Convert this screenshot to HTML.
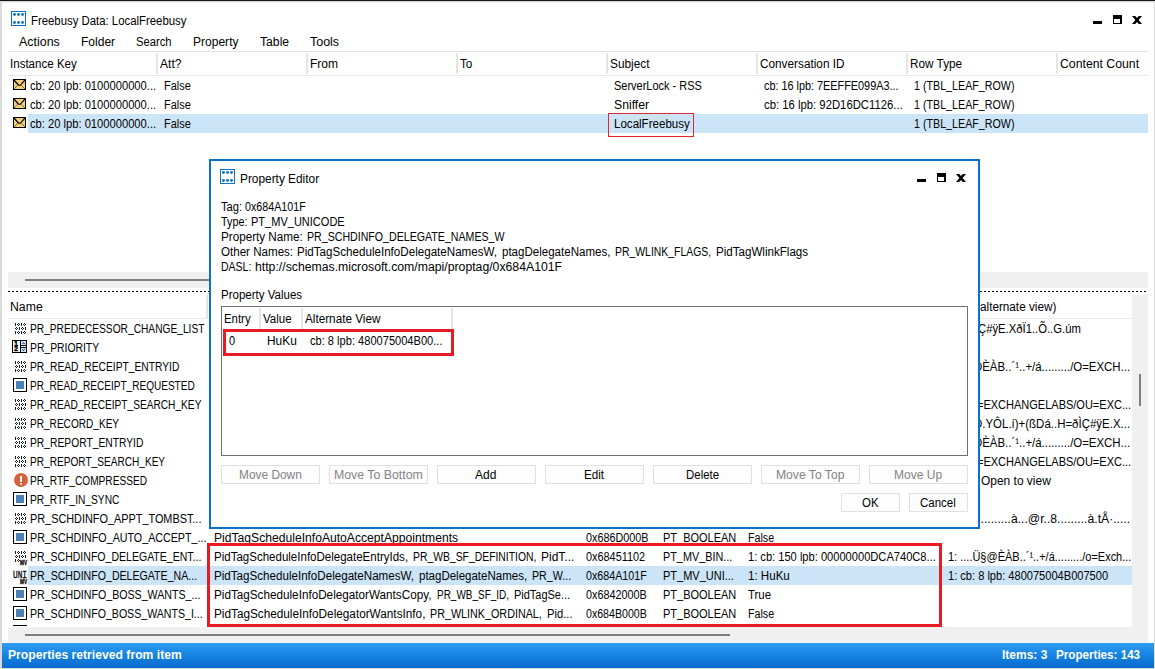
<!DOCTYPE html>
<html><head><meta charset="utf-8"><title>Freebusy Data: LocalFreebusy</title>
<style>
html,body{margin:0;padding:0;}
body{width:1155px;height:669px;position:relative;overflow:hidden;background:#fff;
 font-family:"Liberation Sans",sans-serif;font-size:12px;color:#000;}
.r{position:absolute;box-sizing:border-box;}
.t{position:absolute;white-space:nowrap;line-height:16px;font-size:12px;display:inline-block;transform-origin:0 0;}
.t i{font-style:normal;position:relative;top:-1px;}
.b{font-weight:bold;}
.g{color:#838383;}
svg{position:absolute;overflow:visible;}
.btn{position:absolute;box-sizing:border-box;border:1px solid #e1e1e1;background:#fdfdfd;}
</style></head><body>

<div class="r" style="left:0px;top:0px;width:1155px;height:1px;background:#151515;"></div>
<div class="r" style="left:0px;top:1px;width:1155px;height:1px;background:#d9d9d9;"></div>
<div class="r" style="left:0px;top:2px;width:1155px;height:1px;background:#efefef;"></div>
<div class="r" style="left:0px;top:1px;width:2px;height:668px;background:#dadada;"></div>
<div class="r" style="left:1154px;top:1px;width:1px;height:668px;background:#dedede;"></div>
<svg style="left:11px;top:11px" width="15" height="15" viewBox="0 0 15 15"><rect x="0.5" y="0.5" width="14" height="14" fill="#fff" stroke="#0b73c9" stroke-width="1"/><g fill="#0b73c9"><circle cx="3.5" cy="3.5" r="1.45"/><circle cx="7.5" cy="3.5" r="1.45"/><circle cx="11.5" cy="3.5" r="1.45"/><circle cx="3.5" cy="11.5" r="1.45"/><circle cx="7.5" cy="11.5" r="1.45"/><circle cx="11.5" cy="11.5" r="1.45"/></g></svg>
<span class="t" style="left:31.1px;top:13px;transform:scaleX(0.9470);">Freebusy Data: LocalFreebusy</span>
<div class="r" style="left:1093px;top:21px;width:9px;height:3px;background:#000;"></div>
<div class="r" style="left:1113px;top:15px;width:9px;height:9px;border:1px solid #000;border-top-width:4px;border-right-width:2px;"></div>
<svg style="left:1132px;top:16px" width="10" height="8" viewBox="0 0 10 8"><path d="M0 0 H3.2 L5 1.9 L6.8 0 H10 L6.6 4 L10 8 H6.8 L5 6.1 L3.2 8 H0 L3.4 4 Z" fill="#000"/></svg>
<span class="t" style="left:18.7px;top:34px;transform:scaleX(1.0366);">Actions</span>
<span class="t" style="left:80.7px;top:34px;transform:scaleX(1.0025);">Folder</span>
<span class="t" style="left:135.7px;top:34px;transform:scaleX(0.9334);">Search</span>
<span class="t" style="left:192.7px;top:34px;transform:scaleX(1.0031);">Property</span>
<span class="t" style="left:259.7px;top:34px;transform:scaleX(1.0144);">Table</span>
<span class="t" style="left:310.4px;top:34px;transform:scaleX(1.0387);">Tools</span>
<div class="r" style="left:8px;top:51px;width:1140px;height:1px;background:#e2e2e2;"></div>
<span class="t" style="left:9.7px;top:56px;transform:scaleX(0.9629);">Instance Key</span>
<span class="t" style="left:159.7px;top:56px;transform:scaleX(1.0066);">Att?</span>
<span class="t" style="left:309.7px;top:56px;transform:scaleX(1.0036);">From</span>
<span class="t" style="left:460.4px;top:56px;transform:scaleX(0.9773);">To</span>
<span class="t" style="left:609.7px;top:56px;transform:scaleX(0.9867);">Subject</span>
<span class="t" style="left:759.7px;top:56px;transform:scaleX(0.9820);">Conversation ID</span>
<span class="t" style="left:909.7px;top:56px;transform:scaleX(0.9804);">Row Type</span>
<span class="t" style="left:1060.1px;top:56px;transform:scaleX(1.0221);">Content Count</span>
<div class="r" style="left:156px;top:53px;width:2px;height:21px;background:#e5e5e5;"></div>
<div class="r" style="left:306px;top:53px;width:2px;height:21px;background:#e5e5e5;"></div>
<div class="r" style="left:456px;top:53px;width:2px;height:21px;background:#e5e5e5;"></div>
<div class="r" style="left:606px;top:53px;width:2px;height:21px;background:#e5e5e5;"></div>
<div class="r" style="left:756px;top:53px;width:2px;height:21px;background:#e5e5e5;"></div>
<div class="r" style="left:906px;top:53px;width:2px;height:21px;background:#e5e5e5;"></div>
<div class="r" style="left:1056px;top:53px;width:2px;height:21px;background:#e5e5e5;"></div>
<div class="r" style="left:8px;top:75px;width:1140px;height:1px;background:#e8e8e8;"></div>
<div class="r" style="left:28px;top:114px;width:1120px;height:19px;background:#cce4f7;"></div>
<svg style="left:13px;top:79px" width="13" height="11" viewBox="0 0 13 11"><rect x="0.5" y="0.5" width="12" height="10" fill="#f3cd80" stroke="#000" stroke-width="1"/><path d="M1 1 L5 5.5 L5.6 6.2 H7.4 L8 5.5 L12 1" stroke="#000" stroke-width="1.15" fill="none"/><path d="M1.5 9.5 L4.5 6.5 M11.5 9.5 L8.5 6.5" stroke="#000" stroke-width="1" stroke-dasharray="1 0.5" fill="none" opacity="0.9"/></svg>
<span class="t" style="left:30.1px;top:78px;transform:scaleX(0.9309);">cb: 20 lpb: 0100000000...</span>
<span class="t" style="left:163.7px;top:78px;transform:scaleX(0.9133);">False</span>
<span class="t" style="left:613.7px;top:78px;transform:scaleX(0.9143);">ServerLock - RSS</span>
<span class="t" style="left:763.7px;top:78px;transform:scaleX(0.9041);">cb: 16 lpb: 7EEFFE099A3...</span>
<span class="t" style="left:913.7px;top:78px;transform:scaleX(0.8915);">1 (TBL<i>_</i>LEAF<i>_</i>ROW)</span>
<svg style="left:13px;top:98px" width="13" height="11" viewBox="0 0 13 11"><rect x="0.5" y="0.5" width="12" height="10" fill="#f3cd80" stroke="#000" stroke-width="1"/><path d="M1 1 L5 5.5 L5.6 6.2 H7.4 L8 5.5 L12 1" stroke="#000" stroke-width="1.15" fill="none"/><path d="M1.5 9.5 L4.5 6.5 M11.5 9.5 L8.5 6.5" stroke="#000" stroke-width="1" stroke-dasharray="1 0.5" fill="none" opacity="0.9"/></svg>
<span class="t" style="left:30.1px;top:97px;transform:scaleX(0.9309);">cb: 20 lpb: 0100000000...</span>
<span class="t" style="left:163.7px;top:97px;transform:scaleX(0.9133);">False</span>
<span class="t" style="left:613.7px;top:97px;transform:scaleX(1.0183);">Sniffer</span>
<span class="t" style="left:763.7px;top:97px;transform:scaleX(0.9428);">cb: 16 lpb: 92D16DC1126...</span>
<span class="t" style="left:913.7px;top:97px;transform:scaleX(0.8915);">1 (TBL<i>_</i>LEAF<i>_</i>ROW)</span>
<svg style="left:13px;top:117px" width="13" height="11" viewBox="0 0 13 11"><rect x="0.5" y="0.5" width="12" height="10" fill="#f3cd80" stroke="#000" stroke-width="1"/><path d="M1 1 L5 5.5 L5.6 6.2 H7.4 L8 5.5 L12 1" stroke="#000" stroke-width="1.15" fill="none"/><path d="M1.5 9.5 L4.5 6.5 M11.5 9.5 L8.5 6.5" stroke="#000" stroke-width="1" stroke-dasharray="1 0.5" fill="none" opacity="0.9"/></svg>
<span class="t" style="left:30.1px;top:116px;transform:scaleX(0.9309);">cb: 20 lpb: 0100000000...</span>
<span class="t" style="left:163.7px;top:116px;transform:scaleX(0.9133);">False</span>
<span class="t" style="left:613.7px;top:116px;transform:scaleX(0.9629);">LocalFreebusy</span>
<span class="t" style="left:913.7px;top:116px;transform:scaleX(0.8915);">1 (TBL<i>_</i>LEAF<i>_</i>ROW)</span>
<div class="r" style="left:608px;top:113px;width:86px;height:24px;border:1px solid #e4262e;"></div>
<div class="r" style="left:8px;top:272px;width:1140px;height:16px;background:#f0f0f0;"></div>
<div class="r" style="left:25px;top:279px;width:705px;height:2px;background:#7f7f7f;"></div>
<div class="r" style="left:8px;top:291px;width:1139px;height:1px;background:repeating-linear-gradient(90deg,#000 0,#000 2px,#fff 2px,#fff 4px);"></div>
<span class="t" style="left:10.1px;top:299px;transform:scaleX(1.0214);">Name</span>
<span class="t" style="left:979.9px;top:299px;transform:scaleX(0.9776);">alternate view)</span>
<div class="r" style="left:206px;top:295px;width:2px;height:23px;background:#e5e5e5;"></div>
<div class="r" style="left:8px;top:318px;width:1124px;height:1px;background:#ebebeb;"></div>
<div class="r" style="left:1132px;top:295px;width:16px;height:333px;background:#f0f0f0;"></div>
<div class="r" style="left:1139px;top:374px;width:2px;height:32px;background:#7f7f7f;"></div>
<div class="r" style="left:8px;top:627px;width:1140px;height:16px;background:#f0f0f0;"></div>
<div class="r" style="left:25px;top:634px;width:705px;height:2px;background:#7f7f7f;"></div>
<div class="r" style="left:28px;top:566px;width:1104px;height:19px;background:#cce4f7;"></div>
<svg style="left:15px;top:323px" width="11" height="11" viewBox="0 0 11 11"><g fill="#1a1a1a"><rect x="0" y="0" width="1" height="3"/><path d="M3 0 h1 v1 h1 v1 h-1 v1 h-1 v-1 h-1 v-1 h1 z M3 1 v1 h1 v-1 z" fill-rule="evenodd"/><rect x="6" y="0" width="1" height="3"/><path d="M9 0 h1 v1 h1 v1 h-1 v1 h-1 v-1 h-1 v-1 h1 z M9 1 v1 h1 v-1 z" fill-rule="evenodd"/><path d="M1 4 h1 v1 h1 v1 h-1 v1 h-1 v-1 h-1 v-1 h1 z M1 5 v1 h1 v-1 z" fill-rule="evenodd"/><rect x="4" y="4" width="1" height="3"/><path d="M7 4 h1 v1 h1 v1 h-1 v1 h-1 v-1 h-1 v-1 h1 z M7 5 v1 h1 v-1 z" fill-rule="evenodd"/><rect x="10" y="4" width="1" height="3"/><rect x="0" y="8" width="1" height="3"/><path d="M3 8 h1 v1 h1 v1 h-1 v1 h-1 v-1 h-1 v-1 h1 z M3 9 v1 h1 v-1 z" fill-rule="evenodd"/><rect x="6" y="8" width="1" height="3"/><path d="M9 8 h1 v1 h1 v1 h-1 v1 h-1 v-1 h-1 v-1 h1 z M9 9 v1 h1 v-1 z" fill-rule="evenodd"/></g></svg>
<span class="t" style="left:30.1px;top:321px;transform:scaleX(0.8489);">PR<i>_</i>PREDECESSOR<i>_</i>CHANGE<i>_</i>LIST</span>
<span class="t" style="left:978.4px;top:321px;transform:scaleX(0.9399);">Ç#ÿE.XðÏ1..Õ..G.úm</span>
<svg style="left:12px;top:340px" width="15" height="13" viewBox="0 0 15 13"><rect x="0.5" y="0.5" width="14" height="12" fill="#fff" stroke="#000" stroke-width="1"/><rect x="8" y="0" width="1" height="13" fill="#000"/><rect x="9" y="1" width="5" height="4" fill="#cfe7fb"/><rect x="9" y="8" width="5" height="4" fill="#cfe7fb"/><rect x="8" y="5" width="7" height="1" fill="#000"/><rect x="8" y="7" width="7" height="1" fill="#000"/><path d="M10.5 3.8 L11.5 2.6 L12.5 3.8 M10.5 9.4 L11.5 10.6 L12.5 9.4" stroke="#000" stroke-width="1" fill="none"/><rect x="1" y="6" width="3" height="1" fill="#fff"/></svg>
<span class="t" style="left:14.2px;top:340.6px;font:bold 6.5px 'Liberation Sans',sans-serif;line-height:6.5px;transform:scaleX(1);-webkit-text-stroke:0.5px #000;">1</span>
<span class="t" style="left:14.2px;top:346.2px;font:bold 6.5px 'Liberation Sans',sans-serif;line-height:6.5px;transform:scaleX(1);-webkit-text-stroke:0.5px #000;">2</span>
<span class="t" style="left:30.1px;top:340px;transform:scaleX(0.8634);">PR<i>_</i>PRIORITY</span>
<svg style="left:15px;top:361px" width="11" height="11" viewBox="0 0 11 11"><g fill="#1a1a1a"><rect x="0" y="0" width="1" height="3"/><path d="M3 0 h1 v1 h1 v1 h-1 v1 h-1 v-1 h-1 v-1 h1 z M3 1 v1 h1 v-1 z" fill-rule="evenodd"/><rect x="6" y="0" width="1" height="3"/><path d="M9 0 h1 v1 h1 v1 h-1 v1 h-1 v-1 h-1 v-1 h1 z M9 1 v1 h1 v-1 z" fill-rule="evenodd"/><path d="M1 4 h1 v1 h1 v1 h-1 v1 h-1 v-1 h-1 v-1 h1 z M1 5 v1 h1 v-1 z" fill-rule="evenodd"/><rect x="4" y="4" width="1" height="3"/><path d="M7 4 h1 v1 h1 v1 h-1 v1 h-1 v-1 h-1 v-1 h1 z M7 5 v1 h1 v-1 z" fill-rule="evenodd"/><rect x="10" y="4" width="1" height="3"/><rect x="0" y="8" width="1" height="3"/><path d="M3 8 h1 v1 h1 v1 h-1 v1 h-1 v-1 h-1 v-1 h1 z M3 9 v1 h1 v-1 z" fill-rule="evenodd"/><rect x="6" y="8" width="1" height="3"/><path d="M9 8 h1 v1 h1 v1 h-1 v1 h-1 v-1 h-1 v-1 h1 z M9 9 v1 h1 v-1 z" fill-rule="evenodd"/></g></svg>
<span class="t" style="left:30.1px;top:359px;transform:scaleX(0.8559);">PR<i>_</i>READ<i>_</i>RECEIPT<i>_</i>ENTRYID</span>
<span class="t" style="left:974.4px;top:359px;transform:scaleX(0.9516);">ÐÈÀB..´¹..+/á........./O=EXCH...</span>
<svg style="left:13px;top:378px" width="14" height="14" viewBox="0 0 14 14"><rect x="0.5" y="0.5" width="13" height="13" fill="#fff" stroke="#000" stroke-width="1"/><rect x="3" y="3" width="8" height="8" fill="#4b80b9"/></svg>
<span class="t" style="left:30.1px;top:378px;transform:scaleX(0.8370);">PR<i>_</i>READ<i>_</i>RECEIPT<i>_</i>REQUESTED</span>
<svg style="left:15px;top:399px" width="11" height="11" viewBox="0 0 11 11"><g fill="#1a1a1a"><rect x="0" y="0" width="1" height="3"/><path d="M3 0 h1 v1 h1 v1 h-1 v1 h-1 v-1 h-1 v-1 h1 z M3 1 v1 h1 v-1 z" fill-rule="evenodd"/><rect x="6" y="0" width="1" height="3"/><path d="M9 0 h1 v1 h1 v1 h-1 v1 h-1 v-1 h-1 v-1 h1 z M9 1 v1 h1 v-1 z" fill-rule="evenodd"/><path d="M1 4 h1 v1 h1 v1 h-1 v1 h-1 v-1 h-1 v-1 h1 z M1 5 v1 h1 v-1 z" fill-rule="evenodd"/><rect x="4" y="4" width="1" height="3"/><path d="M7 4 h1 v1 h1 v1 h-1 v1 h-1 v-1 h-1 v-1 h1 z M7 5 v1 h1 v-1 z" fill-rule="evenodd"/><rect x="10" y="4" width="1" height="3"/><rect x="0" y="8" width="1" height="3"/><path d="M3 8 h1 v1 h1 v1 h-1 v1 h-1 v-1 h-1 v-1 h1 z M3 9 v1 h1 v-1 z" fill-rule="evenodd"/><rect x="6" y="8" width="1" height="3"/><path d="M9 8 h1 v1 h1 v1 h-1 v1 h-1 v-1 h-1 v-1 h1 z M9 9 v1 h1 v-1 z" fill-rule="evenodd"/></g></svg>
<span class="t" style="left:30.1px;top:397px;transform:scaleX(0.8451);">PR<i>_</i>READ<i>_</i>RECEIPT<i>_</i>SEARCH<i>_</i>KEY</span>
<span class="t" style="left:977.4px;top:397px;transform:scaleX(0.9169);">=EXCHANGELABS/OU=EXC...</span>
<svg style="left:15px;top:418px" width="11" height="11" viewBox="0 0 11 11"><g fill="#1a1a1a"><rect x="0" y="0" width="1" height="3"/><path d="M3 0 h1 v1 h1 v1 h-1 v1 h-1 v-1 h-1 v-1 h1 z M3 1 v1 h1 v-1 z" fill-rule="evenodd"/><rect x="6" y="0" width="1" height="3"/><path d="M9 0 h1 v1 h1 v1 h-1 v1 h-1 v-1 h-1 v-1 h1 z M9 1 v1 h1 v-1 z" fill-rule="evenodd"/><path d="M1 4 h1 v1 h1 v1 h-1 v1 h-1 v-1 h-1 v-1 h1 z M1 5 v1 h1 v-1 z" fill-rule="evenodd"/><rect x="4" y="4" width="1" height="3"/><path d="M7 4 h1 v1 h1 v1 h-1 v1 h-1 v-1 h-1 v-1 h1 z M7 5 v1 h1 v-1 z" fill-rule="evenodd"/><rect x="10" y="4" width="1" height="3"/><rect x="0" y="8" width="1" height="3"/><path d="M3 8 h1 v1 h1 v1 h-1 v1 h-1 v-1 h-1 v-1 h1 z M3 9 v1 h1 v-1 z" fill-rule="evenodd"/><rect x="6" y="8" width="1" height="3"/><path d="M9 8 h1 v1 h1 v1 h-1 v1 h-1 v-1 h-1 v-1 h1 z M9 9 v1 h1 v-1 z" fill-rule="evenodd"/></g></svg>
<span class="t" style="left:30.1px;top:416px;transform:scaleX(0.8399);">PR<i>_</i>RECORD<i>_</i>KEY</span>
<span class="t" style="left:974.4px;top:416px;transform:scaleX(0.9554);">Ð.YÔL.í)+(ßDá..H=ðÌÇ#ÿE.X...</span>
<svg style="left:15px;top:437px" width="11" height="11" viewBox="0 0 11 11"><g fill="#1a1a1a"><rect x="0" y="0" width="1" height="3"/><path d="M3 0 h1 v1 h1 v1 h-1 v1 h-1 v-1 h-1 v-1 h1 z M3 1 v1 h1 v-1 z" fill-rule="evenodd"/><rect x="6" y="0" width="1" height="3"/><path d="M9 0 h1 v1 h1 v1 h-1 v1 h-1 v-1 h-1 v-1 h1 z M9 1 v1 h1 v-1 z" fill-rule="evenodd"/><path d="M1 4 h1 v1 h1 v1 h-1 v1 h-1 v-1 h-1 v-1 h1 z M1 5 v1 h1 v-1 z" fill-rule="evenodd"/><rect x="4" y="4" width="1" height="3"/><path d="M7 4 h1 v1 h1 v1 h-1 v1 h-1 v-1 h-1 v-1 h1 z M7 5 v1 h1 v-1 z" fill-rule="evenodd"/><rect x="10" y="4" width="1" height="3"/><rect x="0" y="8" width="1" height="3"/><path d="M3 8 h1 v1 h1 v1 h-1 v1 h-1 v-1 h-1 v-1 h1 z M3 9 v1 h1 v-1 z" fill-rule="evenodd"/><rect x="6" y="8" width="1" height="3"/><path d="M9 8 h1 v1 h1 v1 h-1 v1 h-1 v-1 h-1 v-1 h1 z M9 9 v1 h1 v-1 z" fill-rule="evenodd"/></g></svg>
<span class="t" style="left:30.1px;top:435px;transform:scaleX(0.8572);">PR<i>_</i>REPORT<i>_</i>ENTRYID</span>
<span class="t" style="left:974.4px;top:435px;transform:scaleX(0.9516);">ÐÈÀB..´¹..+/á........./O=EXCH...</span>
<svg style="left:15px;top:456px" width="11" height="11" viewBox="0 0 11 11"><g fill="#1a1a1a"><rect x="0" y="0" width="1" height="3"/><path d="M3 0 h1 v1 h1 v1 h-1 v1 h-1 v-1 h-1 v-1 h1 z M3 1 v1 h1 v-1 z" fill-rule="evenodd"/><rect x="6" y="0" width="1" height="3"/><path d="M9 0 h1 v1 h1 v1 h-1 v1 h-1 v-1 h-1 v-1 h1 z M9 1 v1 h1 v-1 z" fill-rule="evenodd"/><path d="M1 4 h1 v1 h1 v1 h-1 v1 h-1 v-1 h-1 v-1 h1 z M1 5 v1 h1 v-1 z" fill-rule="evenodd"/><rect x="4" y="4" width="1" height="3"/><path d="M7 4 h1 v1 h1 v1 h-1 v1 h-1 v-1 h-1 v-1 h1 z M7 5 v1 h1 v-1 z" fill-rule="evenodd"/><rect x="10" y="4" width="1" height="3"/><rect x="0" y="8" width="1" height="3"/><path d="M3 8 h1 v1 h1 v1 h-1 v1 h-1 v-1 h-1 v-1 h1 z M3 9 v1 h1 v-1 z" fill-rule="evenodd"/><rect x="6" y="8" width="1" height="3"/><path d="M9 8 h1 v1 h1 v1 h-1 v1 h-1 v-1 h-1 v-1 h1 z M9 9 v1 h1 v-1 z" fill-rule="evenodd"/></g></svg>
<span class="t" style="left:30.1px;top:454px;transform:scaleX(0.8414);">PR<i>_</i>REPORT<i>_</i>SEARCH<i>_</i>KEY</span>
<span class="t" style="left:977.4px;top:454px;transform:scaleX(0.9169);">=EXCHANGELABS/OU=EXC...</span>
<svg style="left:14px;top:473px" width="14" height="14" viewBox="0 0 14 14"><circle cx="7" cy="7" r="7" fill="#d9603b"/><rect x="6" y="3" width="2" height="6" fill="#fff"/><rect x="6" y="10" width="2" height="1.6" fill="#fff"/></svg>
<span class="t" style="left:30.1px;top:473px;transform:scaleX(0.8454);">PR<i>_</i>RTF<i>_</i>COMPRESSED</span>
<span class="t" style="left:981.4px;top:473px;transform:scaleX(0.9965);">Open to view</span>
<svg style="left:13px;top:492px" width="14" height="14" viewBox="0 0 14 14"><rect x="0.5" y="0.5" width="13" height="13" fill="#fff" stroke="#000" stroke-width="1"/><rect x="3" y="3" width="8" height="8" fill="#4b80b9"/></svg>
<span class="t" style="left:30.1px;top:492px;transform:scaleX(0.8499);">PR<i>_</i>RTF<i>_</i>IN<i>_</i>SYNC</span>
<svg style="left:15px;top:513px" width="11" height="11" viewBox="0 0 11 11"><g fill="#1a1a1a"><rect x="0" y="0" width="1" height="3"/><path d="M3 0 h1 v1 h1 v1 h-1 v1 h-1 v-1 h-1 v-1 h1 z M3 1 v1 h1 v-1 z" fill-rule="evenodd"/><rect x="6" y="0" width="1" height="3"/><path d="M9 0 h1 v1 h1 v1 h-1 v1 h-1 v-1 h-1 v-1 h1 z M9 1 v1 h1 v-1 z" fill-rule="evenodd"/><path d="M1 4 h1 v1 h1 v1 h-1 v1 h-1 v-1 h-1 v-1 h1 z M1 5 v1 h1 v-1 z" fill-rule="evenodd"/><rect x="4" y="4" width="1" height="3"/><path d="M7 4 h1 v1 h1 v1 h-1 v1 h-1 v-1 h-1 v-1 h1 z M7 5 v1 h1 v-1 z" fill-rule="evenodd"/><rect x="10" y="4" width="1" height="3"/><rect x="0" y="8" width="1" height="3"/><path d="M3 8 h1 v1 h1 v1 h-1 v1 h-1 v-1 h-1 v-1 h1 z M3 9 v1 h1 v-1 z" fill-rule="evenodd"/><rect x="6" y="8" width="1" height="3"/><path d="M9 8 h1 v1 h1 v1 h-1 v1 h-1 v-1 h-1 v-1 h1 z M9 9 v1 h1 v-1 z" fill-rule="evenodd"/></g></svg>
<span class="t" style="left:30.1px;top:511px;transform:scaleX(0.9059);">PR<i>_</i>SCHDINFO<i>_</i>APPT<i>_</i>TOMBST...</span>
<span class="t" style="left:967.4px;top:511px;transform:scaleX(1.0136);">.............à...@r..8.........à.tÅ·.....</span>
<svg style="left:13px;top:530px" width="14" height="14" viewBox="0 0 14 14"><rect x="0.5" y="0.5" width="13" height="13" fill="#fff" stroke="#000" stroke-width="1"/><rect x="3" y="3" width="8" height="8" fill="#4b80b9"/></svg>
<span class="t" style="left:30.1px;top:530px;transform:scaleX(0.8913);">PR<i>_</i>SCHDINFO<i>_</i>AUTO<i>_</i>ACCEPT<i>_</i>...</span>
<svg style="left:15px;top:551px" width="11" height="11" viewBox="0 0 11 11"><g fill="#1a1a1a"><rect x="0" y="0" width="1" height="3"/><path d="M3 0 h1 v1 h1 v1 h-1 v1 h-1 v-1 h-1 v-1 h1 z M3 1 v1 h1 v-1 z" fill-rule="evenodd"/><rect x="6" y="0" width="1" height="3"/><path d="M9 0 h1 v1 h1 v1 h-1 v1 h-1 v-1 h-1 v-1 h1 z M9 1 v1 h1 v-1 z" fill-rule="evenodd"/><path d="M1 4 h1 v1 h1 v1 h-1 v1 h-1 v-1 h-1 v-1 h1 z M1 5 v1 h1 v-1 z" fill-rule="evenodd"/><rect x="4" y="4" width="1" height="3"/><path d="M7 4 h1 v1 h1 v1 h-1 v1 h-1 v-1 h-1 v-1 h1 z M7 5 v1 h1 v-1 z" fill-rule="evenodd"/><rect x="10" y="4" width="1" height="3"/><rect x="0" y="8" width="1" height="3"/><path d="M3 8 h1 v1 h1 v1 h-1 v1 h-1 v-1 h-1 v-1 h1 z M3 9 v1 h1 v-1 z" fill-rule="evenodd"/></g></svg>
<span class="t" style="left:20.2px;top:560px;font:bold 6.5px 'Liberation Sans',sans-serif;line-height:6.5px;transform:scaleX(0.72);-webkit-text-stroke:0.3px #000;">MV</span>
<span class="t" style="left:30.1px;top:549px;transform:scaleX(0.8780);">PR<i>_</i>SCHDINFO<i>_</i>DELEGATE<i>_</i>ENT...</span>
<span class="t" style="left:13.2px;top:569.6px;font:normal 11.3px 'Liberation Mono',sans-serif;line-height:11.3px;transform:scaleX(0.69);-webkit-text-stroke:0.3px #000;">UNI</span>
<span class="t" style="left:20.2px;top:579px;font:bold 6.5px 'Liberation Sans',sans-serif;line-height:6.5px;transform:scaleX(0.72);-webkit-text-stroke:0.3px #000;">MV</span>
<span class="t" style="left:30.1px;top:568px;transform:scaleX(0.8831);">PR<i>_</i>SCHDINFO<i>_</i>DELEGATE<i>_</i>NA...</span>
<svg style="left:13px;top:587px" width="14" height="14" viewBox="0 0 14 14"><rect x="0.5" y="0.5" width="13" height="13" fill="#fff" stroke="#000" stroke-width="1"/><rect x="3" y="3" width="8" height="8" fill="#4b80b9"/></svg>
<span class="t" style="left:30.1px;top:587px;transform:scaleX(0.8858);">PR<i>_</i>SCHDINFO<i>_</i>BOSS<i>_</i>WANTS<i>_</i>...</span>
<svg style="left:13px;top:606px" width="14" height="14" viewBox="0 0 14 14"><rect x="0.5" y="0.5" width="13" height="13" fill="#fff" stroke="#000" stroke-width="1"/><rect x="3" y="3" width="8" height="8" fill="#4b80b9"/></svg>
<span class="t" style="left:30.1px;top:606px;transform:scaleX(0.8825);">PR<i>_</i>SCHDINFO<i>_</i>BOSS<i>_</i>WANTS<i>_</i>I...</span>
<div class="r" style="left:13px;top:625px;width:14px;height:1px;background:#000;"></div>
<span class="t" style="left:214.1px;top:530px;transform:scaleX(1.0108);">PidTagScheduleInfoAutoAcceptAppointments</span>
<span class="t" style="left:585.7px;top:530px;transform:scaleX(0.9007);">0x686D000B</span>
<span class="t" style="left:662.9px;top:530px;transform:scaleX(0.9155);">PT<i>_</i>BOOLEAN</span>
<span class="t" style="left:748.4px;top:530px;transform:scaleX(0.8895);">False</span>
<span class="t" style="left:214.1px;top:549px;transform:scaleX(0.9602);">PidTagScheduleInfoDelegateEntryIds,</span>
<span class="t" style="left:413.1px;top:549px;transform:scaleX(0.8644);">PR<i>_</i>WB<i>_</i>SF<i>_</i>DEFINITION,</span>
<span class="t" style="left:541.1px;top:549px;transform:scaleX(1.0012);">PidT...</span>
<span class="t" style="left:585.7px;top:549px;transform:scaleX(0.9066);">0x68451102</span>
<span class="t" style="left:662.9px;top:549px;transform:scaleX(0.9031);">PT<i>_</i>MV<i>_</i>BIN...</span>
<span class="t" style="left:748.4px;top:549px;transform:scaleX(0.9260);">1: cb: 150 lpb: 00000000DCA740C8...</span>
<span class="t" style="left:948.1px;top:549px;transform:scaleX(0.9158);">1: ....Ü§@ÈÀB..´¹..+/á........./o=Exch...</span>
<span class="t" style="left:214.1px;top:568px;transform:scaleX(0.9676);">PidTagScheduleInfoDelegateNamesW,</span>
<span class="t" style="left:419.4px;top:568px;transform:scaleX(0.9589);">ptagDelegateNames,</span>
<span class="t" style="left:532.1px;top:568px;transform:scaleX(0.8880);">PR<i>_</i>W...</span>
<span class="t" style="left:585.7px;top:568px;transform:scaleX(0.8933);">0x684A101F</span>
<span class="t" style="left:662.9px;top:568px;transform:scaleX(0.9161);">PT<i>_</i>MV<i>_</i>UNI...</span>
<span class="t" style="left:748.4px;top:568px;transform:scaleX(0.9640);">1: HuKu</span>
<span class="t" style="left:948.1px;top:568px;transform:scaleX(0.9228);">1: cb: 8 lpb: 480075004B007500</span>
<span class="t" style="left:214.1px;top:587px;transform:scaleX(0.9758);">PidTagScheduleInfoDelegatorWantsCopy,</span>
<span class="t" style="left:436.7px;top:587px;transform:scaleX(0.8310);">PR<i>_</i>WB<i>_</i>SF<i>_</i>ID,</span>
<span class="t" style="left:513.7px;top:587px;transform:scaleX(0.9141);">PidTagSe...</span>
<span class="t" style="left:585.7px;top:587px;transform:scaleX(0.9020);">0x6842000B</span>
<span class="t" style="left:662.9px;top:587px;transform:scaleX(0.9155);">PT<i>_</i>BOOLEAN</span>
<span class="t" style="left:748.4px;top:587px;transform:scaleX(0.9532);">True</span>
<span class="t" style="left:214.1px;top:606px;transform:scaleX(0.9801);">PidTagScheduleInfoDelegatorWantsInfo,</span>
<span class="t" style="left:430.4px;top:606px;transform:scaleX(0.8962);">PR<i>_</i>WLINK<i>_</i>ORDINAL,</span>
<span class="t" style="left:546.7px;top:606px;transform:scaleX(0.9320);">Pid...</span>
<span class="t" style="left:585.7px;top:606px;transform:scaleX(0.8846);">0x684B000B</span>
<span class="t" style="left:662.9px;top:606px;transform:scaleX(0.9155);">PT<i>_</i>BOOLEAN</span>
<span class="t" style="left:748.4px;top:606px;transform:scaleX(0.8895);">False</span>
<div class="r" style="left:207px;top:543px;width:735px;height:84px;border:3px solid #e81a23;"></div>
<div class="r" style="left:2px;top:643px;width:1152px;height:25px;background:linear-gradient(#309df6,#1482e0 50%,#0a6bce);"></div>
<div class="r" style="left:0px;top:668px;width:1155px;height:1px;background:#dcdcdc;"></div>
<span class="t b" style="left:8.4px;top:647px;transform:scaleX(1.0140);color:#fff;">Properties retrieved from item</span>
<span class="t b" style="left:1001.9px;top:647px;transform:scaleX(0.9987);color:#fff;">Items: 3</span>
<span class="t b" style="left:1055.7px;top:647px;transform:scaleX(0.9698);color:#fff;">Properties: 143</span>
<div class="r" style="left:209px;top:159px;width:771px;height:370px;background:#fff;border:2px solid #0b71c9;"></div>
<svg style="left:220px;top:169px" width="15" height="15" viewBox="0 0 15 15"><rect x="0.5" y="0.5" width="14" height="14" fill="#fff" stroke="#0b73c9" stroke-width="1"/><g fill="#0b73c9"><circle cx="3.5" cy="3.5" r="1.45"/><circle cx="7.5" cy="3.5" r="1.45"/><circle cx="11.5" cy="3.5" r="1.45"/><circle cx="3.5" cy="11.5" r="1.45"/><circle cx="7.5" cy="11.5" r="1.45"/><circle cx="11.5" cy="11.5" r="1.45"/></g></svg>
<span class="t" style="left:240.4px;top:171px;transform:scaleX(0.9882);">Property Editor</span>
<div class="r" style="left:917px;top:179px;width:9px;height:3px;background:#000;"></div>
<div class="r" style="left:937px;top:173px;width:9px;height:9px;border:1px solid #000;border-top-width:4px;border-right-width:2px;"></div>
<svg style="left:956px;top:174px" width="10" height="8" viewBox="0 0 10 8"><path d="M0 0 H3.2 L5 1.9 L6.8 0 H10 L6.6 4 L10 8 H6.8 L5 6.1 L3.2 8 H0 L3.4 4 Z" fill="#000"/></svg>
<span class="t" style="left:221.1px;top:199px;transform:scaleX(0.9300);">Tag:</span>
<span class="t" style="left:245.4px;top:199px;transform:scaleX(0.8933);">0x684A101F</span>
<span class="t" style="left:221.1px;top:214px;transform:scaleX(0.8992);">Type:</span>
<span class="t" style="left:251.1px;top:214px;transform:scaleX(0.9181);">PT<i>_</i>MV<i>_</i>UNICODE</span>
<span class="t" style="left:221.1px;top:229px;transform:scaleX(0.9723);">Property Name:</span>
<span class="t" style="left:306.7px;top:229px;transform:scaleX(0.8847);">PR<i>_</i>SCHDINFO<i>_</i>DELEGATE<i>_</i>NAMES<i>_</i>W</span>
<span class="t" style="left:221.1px;top:244px;transform:scaleX(0.9652);">Other Names:</span>
<span class="t" style="left:297.1px;top:244px;transform:scaleX(0.9676);">PidTagScheduleInfoDelegateNamesW,</span>
<span class="t" style="left:502.1px;top:244px;transform:scaleX(0.9616);">ptagDelegateNames,</span>
<span class="t" style="left:615.1px;top:244px;transform:scaleX(0.8677);">PR<i>_</i>WLINK<i>_</i>FLAGS,</span>
<span class="t" style="left:716.1px;top:244px;transform:scaleX(0.9657);">PidTagWlinkFlags</span>
<span class="t" style="left:221.1px;top:259px;transform:scaleX(0.8764);">DASL:</span>
<span class="t" style="left:255.1px;top:259px;transform:scaleX(1.0209);">http://schemas.microsoft.com/mapi/proptag/0x684A101F</span>
<span class="t" style="left:221.1px;top:287px;transform:scaleX(0.9598);">Property Values</span>
<div class="r" style="left:221px;top:306px;width:747px;height:150px;background:#fff;border:1px solid #6f6f6f;"></div>
<span class="t" style="left:223.9px;top:311px;transform:scaleX(0.9495);">Entry</span>
<span class="t" style="left:262.9px;top:311px;transform:scaleX(0.9593);">Value</span>
<span class="t" style="left:305.1px;top:311px;transform:scaleX(0.9772);">Alternate View</span>
<div class="r" style="left:259px;top:308px;width:2px;height:21px;background:#e5e5e5;"></div>
<div class="r" style="left:301px;top:308px;width:2px;height:21px;background:#e5e5e5;"></div>
<div class="r" style="left:451px;top:308px;width:2px;height:21px;background:#e5e5e5;"></div>
<span class="t" style="left:228.7px;top:333px;transform:scaleX(0.9121);">0</span>
<span class="t" style="left:267.4px;top:333px;transform:scaleX(0.9923);">HuKu</span>
<span class="t" style="left:309.7px;top:333px;transform:scaleX(0.9236);">cb: 8 lpb: 480075004B00...</span>
<div class="r" style="left:223px;top:329px;width:231px;height:27px;border:3px solid #e81a23;"></div>
<div class="btn" style="left:221px;top:465px;width:99px;height:19px;"></div>
<span class="t g" style="left:238.7px;top:467px;transform:scaleX(0.9912);">Move Down</span>
<div class="btn" style="left:329px;top:465px;width:99px;height:19px;"></div>
<span class="t g" style="left:334.0px;top:467px;transform:scaleX(1.0268);">Move To Bottom</span>
<div class="btn" style="left:437px;top:465px;width:99px;height:19px;"></div>
<span class="t" style="left:475.4px;top:467px;transform:scaleX(1.0019);">Add</span>
<div class="btn" style="left:545px;top:465px;width:99px;height:19px;"></div>
<span class="t" style="left:584.1px;top:467px;transform:scaleX(0.9716);">Edit</span>
<div class="btn" style="left:653px;top:465px;width:99px;height:19px;"></div>
<span class="t" style="left:686.4px;top:467px;transform:scaleX(0.9542);">Delete</span>
<div class="btn" style="left:761px;top:465px;width:99px;height:19px;"></div>
<span class="t g" style="left:776.4px;top:467px;transform:scaleX(1.0117);">Move To Top</span>
<div class="btn" style="left:869px;top:465px;width:99px;height:19px;"></div>
<span class="t g" style="left:894.1px;top:467px;transform:scaleX(1.0014);">Move Up</span>
<div class="btn" style="left:841px;top:493px;width:59px;height:19px;"></div>
<span class="t" style="left:862.0px;top:495px;transform:scaleX(0.9514);">OK</span>
<div class="btn" style="left:909px;top:493px;width:59px;height:19px;"></div>
<span class="t" style="left:920.4px;top:495px;transform:scaleX(0.9583);">Cancel</span>
</body></html>
